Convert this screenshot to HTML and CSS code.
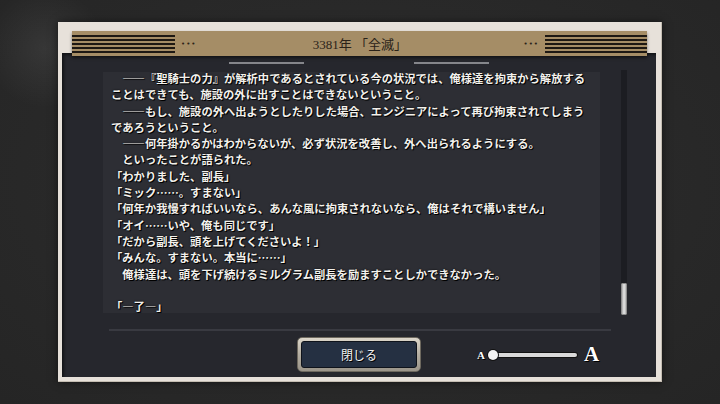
FILE: index.html
```html
<!DOCTYPE html>
<html lang="ja">
<head>
  <meta charset="UTF-8">
  <meta name="viewport" content="width=device-width, initial-scale=1.0">
  <title>3381年 「全滅」</title>
  <link rel="stylesheet" href="styles.css">
</head>
<body>
  <div class="frame">
    <header class="title-bar">
      <span class="stripes"></span>
      <span class="dots">•••</span>
      <h1 class="title">3381年 「全滅」</h1>
      <span class="dots">•••</span>
      <span class="stripes"></span>
    </header>

    <section class="panel">
      <div class="rules"><span></span><span></span></div>

      <div class="reader">
        <div class="log">
          <div class="lines">
            <p>　――『聖騎士の力』が解析中であるとされている今の状況では、俺様達を拘束から解放する<br>ことはできても、施設の外に出すことはできないということ。</p>
            <p>　――もし、施設の外へ出ようとしたりした場合、エンジニアによって再び拘束されてしまう<br>であろうということ。</p>
            <p>　――何年掛かるかはわからないが、必ず状況を改善し、外へ出られるようにする。</p>
            <p>　といったことが語られた。</p>
            <p>「わかりました、副長」</p>
            <p>「ミック……。すまない」</p>
            <p>「何年か我慢すればいいなら、あんな風に拘束されないなら、俺はそれで構いません」</p>
            <p>「オイ……いや、俺も同じです」</p>
            <p>「だから副長、頭を上げてくださいよ！」</p>
            <p>「みんな。すまない。本当に……」</p>
            <p>　俺様達は、頭を下げ続けるミルグラム副長を励ますことしかできなかった。</p>
            <p>&nbsp;</p>
            <p>「―了―」</p>
          </div>
        </div>
        <div class="scroll"><div class="thumb"></div></div>
      </div>

      <div class="divider"></div>

      <footer class="actions">
        <span></span>
        <button class="close"><span>閉じる</span></button>
        <div class="size">
          <span class="size-small">A</span>
          <span class="track"></span>
          <span class="size-large">A</span>
        </div>
      </footer>
    </section>
  </div>
</body>
</html>
```

FILE: styles.css
```css
body {
  margin: 0;
  width: 720px;
  height: 404px;
  overflow: hidden;
  box-sizing: border-box;
  padding-top: 22px;
  font-family: "Noto Sans CJK JP", sans-serif;
  background:
    radial-gradient(circle at 45px 48px, rgba(255, 255, 255, 0.07), transparent 60px),
    radial-gradient(ellipse at 50% 45%, #2e2e2e, #252525);
}

/* cream outer frame */
.frame {
  width: 604px;
  height: 360px;
  margin: 0 auto;
  box-sizing: border-box;
  padding: 9px 6px 5px 4px;
  background: #e7e1da;
  box-shadow: inset -1px -1px 0 #c4bdb2, 0 0 8px rgba(0, 0, 0, 0.5);
  display: flex;
  flex-direction: column;
}

/* gold title strip */
.title-bar {
  position: relative;
  z-index: 1;
  height: 25px;
  margin: 0 9px -3px 10px;
  background: #a58d66;
  display: flex;
  align-items: center;
  box-shadow: 0 2px 3px rgba(0, 0, 0, 0.45);
}

.stripes {
  width: 103px;
  height: 22px;
  margin-top: 1px;
  background: repeating-linear-gradient(to bottom, #a58d66 0 2px, #1d1813 2px 4px);
}

.stripes:last-child {
  width: 102px;
}

.dots {
  margin: 0 6px;
  font-family: "DejaVu Sans", sans-serif;
  font-size: 7px;
  letter-spacing: 1px;
  color: #2a2218;
}

.title {
  flex: 1;
  margin: 0;
  text-align: center;
  font-family: "Liberation Serif", "Noto Sans CJK JP", serif;
  font-size: 13px;
  font-weight: normal;
  color: #2a2218;
}

/* dark inner panel */
.panel {
  flex: 1;
  padding-top: 9px;
  background: #26272d;
  box-shadow: inset 2px 2px 3px rgba(0, 0, 0, 0.5);
}

.rules {
  display: flex;
  justify-content: center;
  gap: 110px;
}

.rules span {
  width: 75px;
  height: 2px;
  background: #85868b;
}

.reader {
  display: flex;
  height: 241px;
  margin-top: 8px;
  padding-left: 41px;
}

.log {
  width: 497px;
  height: 241px;
  background: #2d2e34;
}

.lines {
  margin-top: -2px;
  padding-left: 8px;
  font-size: 11.3px;
  line-height: 16.3px;
  font-weight: 700;
  color: #f3f1ec;
  white-space: nowrap;
  text-shadow: 1px 1px 0 #000, 0 0 2px #000;
}

.lines p {
  margin: 0;
}

.scroll {
  position: relative;
  width: 6px;
  height: 245px;
  margin: -2px 0 0 21px;
  background: #1c1d22;
}

.thumb {
  position: absolute;
  left: 0;
  bottom: 0;
  width: 6px;
  height: 32px;
  box-sizing: border-box;
  border: 1px solid #8d8d8d;
  border-radius: 1px;
  background: linear-gradient(to right, #a9a9a9, #e6e6e6 50%, #b4b4b4);
}

.divider {
  width: 502px;
  height: 2px;
  margin: 16px 0 0 47px;
  background: #393a41;
}

/* bottom controls */
.actions {
  display: grid;
  grid-template-columns: 1fr 124px 1fr;
  align-items: center;
  padding-top: 6px;
}

.close {
  width: 124px;
  height: 35px;
  padding: 3px;
  border: 1px solid #6e695f;
  border-radius: 5px;
  background: linear-gradient(to bottom, #ddd7cb, #b3ada1 50%, #9b958a);
  cursor: pointer;
}

.close span {
  display: flex;
  align-items: center;
  justify-content: center;
  height: 100%;
  box-sizing: border-box;
  border: 1px solid #0f131b;
  border-radius: 3px;
  background: #253042;
  color: #f2f2f2;
  font-family: "Noto Sans CJK JP", sans-serif;
  font-size: 12px;
  text-shadow: 1px 1px 0 #000;
}

.size {
  display: flex;
  align-items: center;
  padding-left: 56px;
  font-family: "Liberation Serif", serif;
  font-weight: 700;
  color: #fff;
  text-shadow: 1px 1px 0 #000, 0 0 1px #000;
}

.size-small {
  font-size: 11px;
}

.size-large {
  font-size: 21px;
  margin-left: 7px;
}

.track {
  position: relative;
  width: 84px;
  height: 4px;
  margin-left: 8px;
  border-radius: 2px;
  background: #d9d9d9;
  box-shadow: 0 0 0 1px #111;
}

.track::before {
  content: "";
  position: absolute;
  left: -5px;
  top: -3px;
  width: 10px;
  height: 10px;
  border-radius: 50%;
  background: #f4f4f4;
  box-shadow: 0 0 0 1px #111;
}
```
